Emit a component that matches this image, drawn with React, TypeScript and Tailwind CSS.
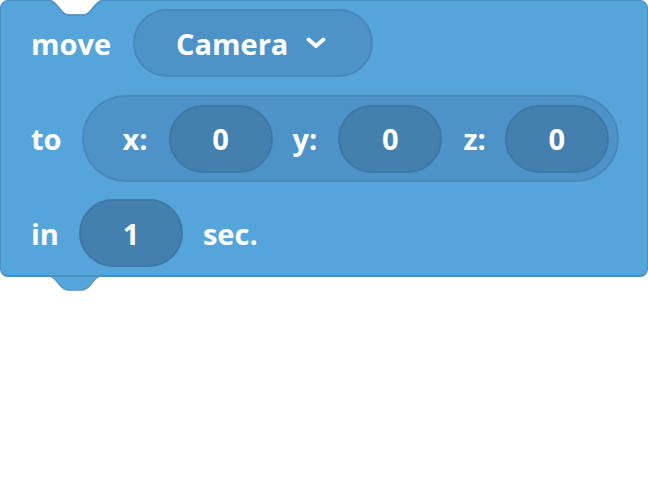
import { ReactNode } from "react";

const Value = ({ children }: { children: ReactNode }) => (
  <div className="flex h-[68px] w-[104px] items-center justify-center rounded-full border-2 border-[#3e78a6] bg-[#4380ad]">
    {children}
  </div>
);

const Tab = ({ fill }: { fill: string }) => (
  <svg width="54" height="17" viewBox="0 0 54 17" className="block">
    <path d="M0 0 C9 0 11 14.5 20 14.5 L34 14.5 C43 14.5 45 0 54 0 Z" fill={fill} />
    <path
      d="M0 0.6 C9 0.6 11 15 20 15 L34 15 C43 15 45 0.6 54 0.6"
      fill="none"
      stroke="#4a8fc2"
      strokeWidth="1.4"
    />
  </svg>
);

export default function App() {
  return (
    <div
      className="text-[29px] font-bold text-white leading-none"
      style={{ fontFamily: '"Open Sans", "Noto Sans", sans-serif' }}
    >
      <div className="relative flex w-[648px] flex-col gap-[17px] rounded-lg border border-b-2 border-[#4a8fc2] bg-[#56a5da] pb-2 pl-[30px] pt-2">
        {/* top notch */}
        <div className="absolute top-[-1px] left-[48px]">
          <Tab fill="#ffffff" />
        </div>

        <div className="flex h-[68px] items-center gap-[22px]">
          <span>move</span>
          <div className="flex h-[68px] items-center gap-[18px] rounded-full border-2 border-[#4888bb] bg-[#4e93c7] pl-[41px] pr-[45px]">
            <span>Camera</span>
            <svg width="20" height="12" viewBox="0 0 20 12">
              <polyline
                points="2.5,2.5 10,9 17.5,2.5"
                fill="none"
                stroke="#ffffff"
                strokeWidth="3.8"
                strokeLinecap="round"
                strokeLinejoin="round"
              />
            </svg>
          </div>
        </div>

        <div className="mt-px flex h-[87px] items-center gap-[20px]">
          <span>to</span>
          <div className="flex h-[87px] items-center rounded-full border-2 border-[#4888bb] bg-[#4e93c7] pl-[39px] pr-[8px]">
            <span className="mr-[21px]">x:</span>
            <Value>0</Value>
            <span className="ml-[20px] mr-[21px]">y:</span>
            <Value>0</Value>
            <span className="ml-[21px] mr-[19px]">z:</span>
            <Value>0</Value>
          </div>
        </div>

        <div className="flex h-[68px] items-center gap-[20px]">
          <span>in</span>
          <Value>1</Value>
          <span>sec.</span>
        </div>
      </div>

      {/* bottom tab */}
      <div className="ml-[48px] mt-[-2px]">
        <Tab fill="#56a5da" />
      </div>
    </div>
  );
}
